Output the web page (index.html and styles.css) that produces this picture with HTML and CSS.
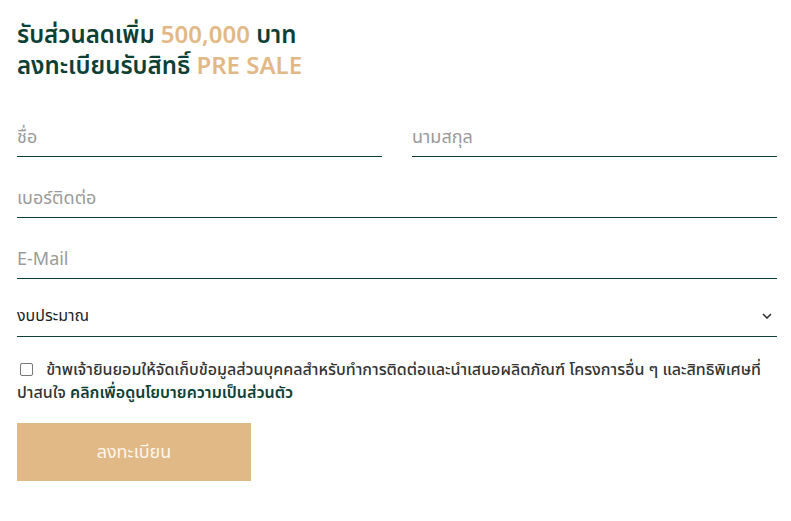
FILE: index.html
```html
<!DOCTYPE html>
<html lang="th">
  <head>
    <meta charset="UTF-8" />
    <meta name="viewport" content="width=device-width, initial-scale=1.0" />
    <title>ลงทะเบียน</title>
    <link rel="stylesheet" href="styles.css">
  </head>
  <body>
    <form class="register">
      <h2 class="title">
        รับส่วนลดเพิ่ม <span class="gold">500,000</span> บาท<br>
        ลงทะเบียนรับสิทธิ์ <span class="gold">PRE SALE</span>
      </h2>

      <div class="row two">
        <input class="field" type="text" placeholder="ชื่อ">
        <input class="field" type="text" placeholder="นามสกุล">
      </div>
      <div class="row">
        <input class="field" type="tel" placeholder="เบอร์ติดต่อ">
      </div>
      <div class="row">
        <input class="field" type="email" placeholder="E-Mail">
      </div>
      <div class="row select-wrap">
        <div class="field select">
          <span>งบประมาณ</span>
          <svg width="10" height="6" viewBox="0 0 10 6"><path d="M1 1l4 4 4-4" fill="none" stroke="#333" stroke-width="1.6"/></svg>
        </div>
      </div>

      <label class="consent">
        <span class="box"></span>
        ข้าพเจ้ายินยอมให้จัดเก็บข้อมูลส่วนบุคคลสำหรับทำการติดต่อและนำเสนอผลิตภัณฑ์ โครงการอื่น ๆ และสิทธิพิเศษที่ ปาสนใจ <a href="#">คลิกเพื่อดูนโยบายความเป็นส่วนตัว</a>
      </label>

      <button class="submit" type="button">ลงทะเบียน</button>
    </form>
  </body>
</html>
```

FILE: styles.css
```css
* {
  margin: 0;
  padding: 0;
  box-sizing: border-box;
}
body {
  background: #fff;
  font-family: "Noto Sans", "Noto Sans Thai", sans-serif;
  color: #0e3f36;
}
.register {
  width: 760px;
  margin-left: 17px;
  padding-top: 18px;
}
.title {
  font-size: 24px;
  line-height: 31px;
  font-weight: 600;
  color: #0e3f36;
}
.gold {
  color: #e2b986;
}
.row {
  display: flex;
  margin-top: 20px;
}
.row.two {
  margin-top: 36px;
  gap: 30px;
}
.field {
  flex: 1;
  height: 41px;
  border: none;
  border-bottom: 1px solid #0e3f36;
  font-family: inherit;
  font-size: 18px;
  color: #333;
  outline: none;
  background: transparent;
}
.field::placeholder {
  color: #9a9a9a;
}
.select-wrap {
  margin-top: 17px;
}
.select {
  display: flex;
  align-items: center;
  justify-content: space-between;
  font-size: 16px;
  color: #222;
  padding-right: 5px;
}
.consent {
  display: block;
  margin-top: 21px;
  font-size: 16px;
  line-height: 23px;
  font-weight: 500;
  color: #333;
}
.consent .box {
  display: inline-block;
  width: 13px;
  height: 13px;
  border: 1.5px solid #777;
  border-radius: 2px;
  margin: 0 9px 0 3px;
  vertical-align: -1px;
}
.consent a {
  color: #0e3f36;
  text-decoration: none;
  font-weight: 600;
}
.submit {
  display: block;
  margin-top: 19px;
  width: 234px;
  height: 58px;
  border: none;
  background: #e1b987;
  color: #fdf6ec;
  font-family: inherit;
  font-size: 18px;
}
```
